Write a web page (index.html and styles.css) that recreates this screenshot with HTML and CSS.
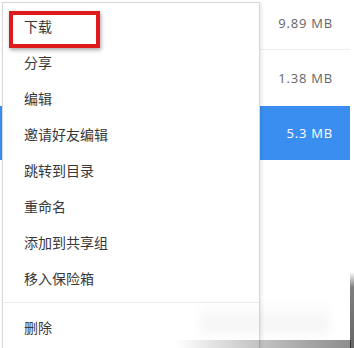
FILE: index.html
```html
<!DOCTYPE html>
<html lang="zh-CN">
<head>
<meta charset="utf-8">
<title>菜单</title>
<link rel="stylesheet" href="styles.css">
</head>
<body>
<div class="screen">
  <div class="list">
    <div class="row"><span class="size">9.89 MB</span></div>
    <div class="row"><span class="size">1.38 MB</span></div>
    <div class="row selected"><span class="size">5.3 MB</span></div>
  </div>
  <ul class="menu">
    <li class="item">下载</li>
    <li class="item">分享</li>
    <li class="item">编辑</li>
    <li class="item">邀请好友编辑</li>
    <li class="item">跳转到目录</li>
    <li class="item">重命名</li>
    <li class="item">添加到共享组</li>
    <li class="item">移入保险箱</li>
    <li class="divider"></li>
    <li class="item">删除</li>
  </ul>
  <div class="highlight"></div>
  <div class="mosaic"></div>
  <div class="shadow-bottom"></div>
  <div class="shadow-right"></div>
</div>
</body>
</html>
```

FILE: styles.css
```css
html, body {
  margin: 0;
  padding: 0;
  background: #fff;
}

.screen {
  position: relative;
  width: 354px;
  height: 348px;
  overflow: hidden;
  background: #fff;
  font-family: "Noto Sans CJK SC", "Microsoft YaHei", sans-serif;
}

.list {
  width: 350px;
  display: flex;
  flex-direction: column;
}

.row {
  display: flex;
  align-items: center;
  justify-content: flex-end;
  padding-right: 17px;
  box-sizing: border-box;
  height: 56px;
  font-family: "Open Sans", "Liberation Sans", sans-serif;
  font-size: 13px;
  letter-spacing: 0.8px;
  color: #666;
}

.row:first-child {
  height: 50px;
  border-bottom: 1px solid #eeeeee;
  padding-bottom: 4px;
}

.row.selected {
  height: 54px;
  background: #3a8ef0;
  color: #fff;
  padding-bottom: 1px;
}

.menu {
  position: absolute;
  left: 2px;
  top: 2px;
  bottom: -20px;
  width: 256px;
  margin: 0;
  padding: 5px 0;
  list-style: none;
  background: #fff;
  border: 1px solid #d6d6d6;
  box-shadow: 2px 1px 3px rgba(0, 0, 0, 0.08);
}

.item {
  height: 36px;
  line-height: 36px;
  padding-left: 21px;
  font-size: 14px;
  color: #383838;
}

.divider {
  height: 1px;
  background: #ececec;
  margin: 6px 0;
}

.highlight {
  position: absolute;
  left: 9px;
  top: 11px;
  width: 91px;
  height: 37px;
  box-sizing: border-box;
  border: 4px solid #df1a1d;
  box-shadow: 1px 2px 4px rgba(0, 0, 0, 0.35);
}

.mosaic {
  position: absolute;
  left: 200px;
  top: 300px;
  width: 130px;
  height: 38px;
  background: linear-gradient(180deg, rgba(0,0,0,0) 0%, rgba(0,0,0,0.025) 40%, rgba(0,0,0,0.04) 65%, rgba(0,0,0,0.01) 100%);
  filter: blur(4px);
}

.shadow-bottom {
  position: absolute;
  left: 0;
  top: 340px;
  width: 351px;
  height: 8px;
  background: linear-gradient(90deg, rgba(0,0,0,0) 50%, rgba(0,0,0,0.2) 70%, rgba(0,0,0,0.45) 100%);
}

.shadow-right {
  position: absolute;
  left: 350px;
  top: 272px;
  width: 4px;
  height: 76px;
  background: linear-gradient(180deg, rgba(0,0,0,0) 0%, rgba(0,0,0,0.5) 20%, rgba(0,0,0,0.6) 100%);
}
```
